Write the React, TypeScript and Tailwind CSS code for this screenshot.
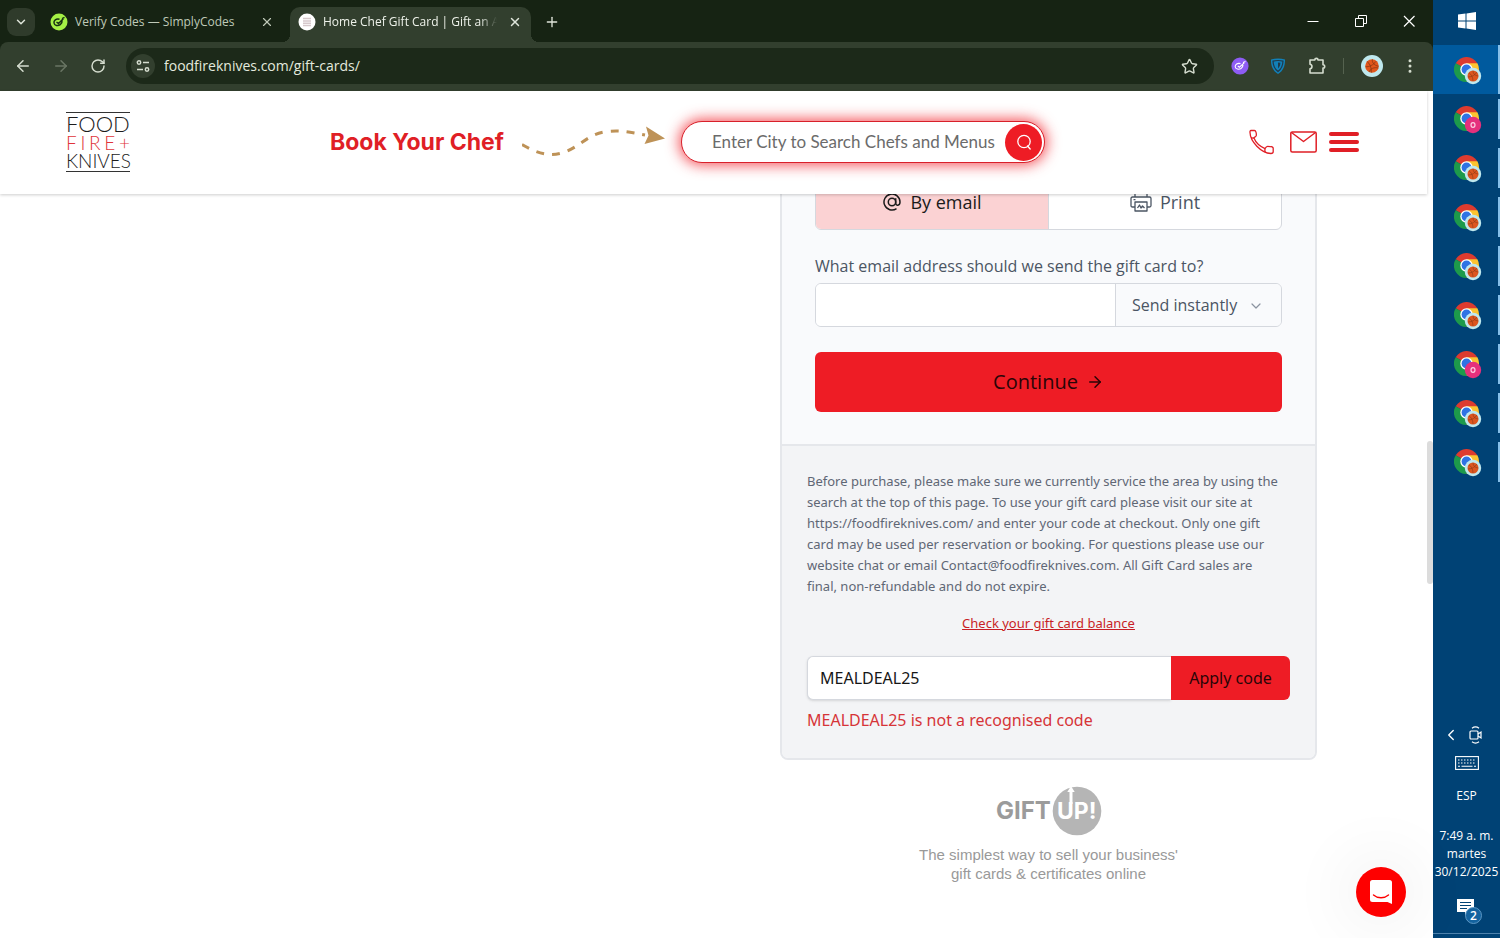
import { useState } from "react";
import {
  ArrowLeft,
  ArrowRight,
  ChevronDown,
  ChevronLeft,
  EllipsisVertical,
  Plus,
  RotateCw,
  Star,
  X,
} from "lucide-react";
import clsx from "clsx";

const windows = [
  { id: 1, profile: "ball", active: true },
  { id: 2, profile: "o" },
  { id: 3, profile: "ball" },
  { id: 4, profile: "ball" },
  { id: 5, profile: "ball" },
  { id: 6, profile: "ball" },
  { id: 7, profile: "o" },
  { id: 8, profile: "ball" },
  { id: 9, profile: "ball" },
];

const terms = [
  "Before purchase, please make sure we currently service the area by using the",
  "search at the top of this page. To use your gift card please visit our site at",
  "https://foodfireknives.com/ and enter your code at checkout. Only one gift",
  "card may be used per reservation or booking. For questions please use our",
  "website chat or email Contact@foodfireknives.com. All Gift Card sales are",
  "final, non-refundable and do not expire.",
];

function Basketball({ className }: { className?: string }) {
  return (
    <svg viewBox="0 0 22 22" className={className} aria-hidden>
      <circle cx="11" cy="11" r="11" fill="#bfe8ee" />
      <circle cx="11" cy="11" r="6.8" fill="#e2561b" />
      <path
        d="M6 6.500c3 2 4.500 5.500 4.300 11.200M11.500 4.300c-.8 3 1.500 6 6 7M4.400 11.800c4 .2 8-1.800 10.600-5.500M8 17c1.500-3.500 5-5 9.300-4"
        fill="none"
        stroke="#7d3212"
        strokeWidth=".7"
      />
    </svg>
  );
}

function ChromeIcon({ profile }: { profile: string }) {
  return (
    <svg viewBox="0 0 28 28" className="mt-0.5 size-7" aria-hidden>
      <path d="M12.500 12.500 1.700 6.200A12.500 12.500 0 0 1 23.300 6.200Z" fill="#dd3b2f" />
      <path d="M12.500 12.500 1.700 6.200A12.500 12.500 0 0 0 12.500 25L18 15Z" fill="#1d9a4b" />
      <path d="M12.500 6.300H23.400A12.500 12.500 0 0 1 12.500 25L18 15Z" fill="#fcc430" />
      <circle cx="12.500" cy="12.500" r="6.200" fill="#fff" />
      <circle cx="12.500" cy="12.500" r="4.900" fill="#2f73e4" />
      {profile === "ball" ? (
        <>
          <circle cx="19" cy="19" r="8.200" fill="#bfe8ee" />
          <circle cx="19" cy="19" r="5.500" fill="#dd561f" />
          <path
            d="M15 16c2 1 4 4 4 8M19 13.800c0 3 2 5 5.200 5.200M14 20c4 0 7-2 9-5"
            fill="none"
            stroke="#8a3a17"
            strokeWidth=".6"
          />
        </>
      ) : (
        <>
          <circle cx="19" cy="19" r="8.200" fill="#e5307c" />
          <ellipse cx="19" cy="19" rx="2" ry="2.400" fill="none" stroke="#fbd0e2" strokeWidth="1.200" />
        </>
      )}
    </svg>
  );
}

function TabStrip() {
  return (
    <div className="flex h-[42px] items-end bg-[#162313] pl-[7px] text-[#dfe5da]">
      <button type="button" aria-label="Search tabs" className="mb-[6px] flex size-7 items-center justify-center rounded-[9px] bg-[#2f3b2b]">
        <ChevronDown className="size-3.5" strokeWidth={2.5} />
      </button>
      <div className="flex h-[35px] w-[255px] items-center pb-[5px] pl-[15px] pr-4">
        <svg viewBox="0 0 18 18" className="mr-[7px] size-[18px]" aria-hidden>
          <circle cx="9" cy="9" r="8.500" fill="#a5f045" />
          <path d="M9.500 6.300C6 5.500 3.600 7.500 4 10c.4 2.700 4 3.300 6.200 1.700 1.600-1.200 2-3 1.800-4.200M6.500 9l2 1.500L13.500 5.500M12 5.600l2.500-1.200" fill="none" stroke="#173012" strokeWidth="1.500" />
        </svg>
        <span className="whitespace-nowrap text-xs text-[#bfc9b8]">Verify Codes — SimplyCodes</span>
        <button type="button" aria-label="Close tab" className="ml-auto text-[#bfc9b8]">
          <X className="size-3.5" />
        </button>
      </div>
      <div className="relative flex h-[35px] w-[241px] items-center rounded-t-[10px] bg-[#323f2e] pb-[5px] pl-2 pr-[9px]">
        <span className="absolute -left-2 bottom-0 size-2 bg-[radial-gradient(circle_at_top_left,#162313_8px,#323f2e_8px)]" />
        <span className="absolute -right-2 bottom-0 size-2 bg-[radial-gradient(circle_at_top_right,#162313_8px,#323f2e_8px)]" />
        <svg viewBox="0 0 18 18" className="mr-[7px] size-[18px] shrink-0" aria-hidden>
          <circle cx="9" cy="9" r="8.500" fill="#fff" />
          <path d="M5 5.500h8M5 8h8M5 10.300h8M5 12.500h8" stroke="#d6c8cb" strokeWidth="1.600" />
        </svg>
        <span className="w-[174px] overflow-hidden whitespace-nowrap text-xs text-[#eef2ea] [mask-image:linear-gradient(to_right,black_90%,transparent)]">
          Home Chef Gift Card | Gift an A
        </span>
        <button type="button" aria-label="Close tab" className="ml-auto">
          <X className="size-3.5" strokeWidth={2.5} />
        </button>
      </div>
      <button type="button" aria-label="New tab" className="mb-3 ml-[13px]">
        <Plus className="size-4" />
      </button>
      <div className="ml-auto flex h-full items-center gap-[34px] pr-[17px] text-white">
        <button type="button" aria-label="Minimize">
          <svg viewBox="0 0 14 14" className="size-3.5" aria-hidden>
            <path d="M1.500 7.500h11" stroke="currentColor" />
          </svg>
        </button>
        <button type="button" aria-label="Restore">
          <svg viewBox="0 0 14 14" className="size-3.5" fill="none" stroke="currentColor" aria-hidden>
            <path d="M1.500 4.500h8v8h-8zM4.500 4.500v-3h8v8h-3" />
          </svg>
        </button>
        <button type="button" aria-label="Close window">
          <svg viewBox="0 0 14 14" className="size-3.5" fill="none" stroke="currentColor" strokeWidth="1.200" aria-hidden>
            <path d="m2 2 10.500 10.500M12.500 2 2 12.500" />
          </svg>
        </button>
      </div>
    </div>
  );
}

function Toolbar() {
  return (
    <div className="bg-[#162313]">
      <div className="flex h-[49px] items-center rounded-t-lg bg-[#323f2e] px-3.5 pb-px text-[#d5ddcf]">
        <button type="button" aria-label="Back">
          <ArrowLeft className="size-[18px]" />
        </button>
        <button type="button" aria-label="Forward" className="ml-5 text-[#6a7664]">
          <ArrowRight className="size-[18px]" />
        </button>
        <button type="button" aria-label="Reload" className="ml-5">
          <RotateCw className="size-4" strokeWidth={2.2} />
        </button>
        <div className="ml-5 flex h-9 flex-1 items-center rounded-full bg-[#1c2919] pl-[5px] pr-4">
          <button type="button" aria-label="Site information" className="flex size-6 items-center justify-center rounded-full bg-[#323f2e]">
            <svg viewBox="0 0 16 16" className="size-4" fill="none" stroke="currentColor" strokeWidth="1.500" aria-hidden>
              <circle cx="4" cy="4.500" r="1.700" />
              <path d="M8 4.500h6M2 11.500h6" />
              <circle cx="12" cy="11.500" r="1.700" />
            </svg>
          </button>
          <input
            aria-label="Address"
            defaultValue="foodfireknives.com/gift-cards/"
            className="ml-[9px] min-w-0 flex-1 bg-transparent text-sm text-[#e3e9de] outline-none"
          />
          <button type="button" aria-label="Bookmark this page">
            <Star className="size-[17px]" />
          </button>
        </div>
        <button type="button" aria-label="SimplyCodes" className="ml-[17px]">
          <svg viewBox="0 0 18 18" className="size-[18px]" aria-hidden>
            <circle cx="9" cy="9" r="8.600" fill="#8e5cf5" />
            <path d="M9.500 6.600C6.500 5.800 4 7.500 4.200 9.800c.3 2.500 3.700 3 5.800 1.700 1.500-1 2-2.400 2-3.500M6.800 9l1.600 1.200 4.800-4.400M12 5.400l2.500-.8" fill="none" stroke="#fff" strokeWidth="1.100" />
          </svg>
        </button>
        <button type="button" aria-label="Shield" className="ml-5">
          <svg viewBox="0 0 18 18" className="size-[18px]" aria-hidden>
            <path d="M9 1.500c2.500 0 4.700.3 7 1 .3 6.500-2 11.500-7 14.500-5-3-7.300-8-7-14.500 2.300-.7 4.500-1 7-1Z" fill="#1280b8" />
            <path d="M9 3.500c2 0 3.400.2 5 .6-.1 4.500-1.600 8-5 10.500-3.400-2.500-4.900-6-5-10.500 1.600-.4 3-.6 5-.6Z" fill="none" stroke="#20394a" strokeWidth="1.200" />
            <path d="M9 5.500v6c1.500-1.500 2.300-3.500 2.400-5.800Z" fill="#20394a" />
          </svg>
        </button>
        <button type="button" aria-label="Extensions" className="ml-5">
          <svg viewBox="0 0 20 20" className="size-5" fill="none" stroke="currentColor" strokeWidth="1.600" strokeLinejoin="round" aria-hidden>
            <path d="M3 4h4.800a1.600 1.600 0 0 1 3.200 0H16v4.700a1.700 1.700 0 0 1 0 3.400V17H3v-4.200c2.600-.3 2.600-4.200 0-4.500Z" />
          </svg>
        </button>
        <span className="ml-4 h-4 w-px bg-[#55624f]" />
        <button type="button" aria-label="Profile" className="ml-[17px]">
          <Basketball className="size-[22px]" />
        </button>
        <button type="button" aria-label="Menu" className="ml-[18px]">
          <EllipsisVertical className="size-[18px]" />
        </button>
      </div>
    </div>
  );
}

function SiteHeader() {
  return (
    <header className="relative z-10 mr-[6px] flex h-[103px] items-center justify-between bg-white pb-px pl-[66px] pr-[68px] shadow-[0_1px_3px_rgba(0,0,0,0.2)]">
      <a
        href="#"
        aria-label="Food Fire + Knives"
        className="w-16 border-y border-[#333] py-px font-['Lato',sans-serif] font-light text-[#1c1c1c]"
      >
        <span className="block text-[22px] leading-[20px]">FOOD</span>
        <span className="flex justify-between text-[19px] leading-[18px] text-[#e0343a]">
          <span>F</span>
          <span>I</span>
          <span>R</span>
          <span>E</span>
          <span>+</span>
        </span>
        <span className="block text-[19px] leading-[18px]">KNIVES</span>
      </a>

      <div className="flex items-center pr-1">
        <span className="w-[177px] whitespace-nowrap font-['Inter',sans-serif] text-[23px] font-bold text-[#e01f26]">
          Book Your Chef
        </span>
        <svg viewBox="0 0 143 32" className="ml-[15px] h-8 w-[143px]" aria-hidden>
          <path
            d="M0 18.500C18 29 30 31 44 25.500 60 19 66 8 85 5.500c14-1.500 22 .5 38 3.500"
            fill="none"
            stroke="#be9257"
            strokeWidth="3"
            strokeDasharray="8 8"
          />
          <path d="m124 .5 19 12-20.500 5.500 4-8.500Z" fill="#be9257" />
        </svg>
        <form
          className="ml-4 flex h-[42px] w-[364px] items-center rounded-full border border-[#d8202a] bg-white pl-[30px] pr-[2px] shadow-[0_0_14px_2px_rgba(240,24,34,0.75)]"
          onSubmit={(e) => e.preventDefault()}
        >
          <input
            aria-label="Enter city"
            placeholder="Enter City to Search Chefs and Menus"
            className="min-w-0 flex-1 font-['Lato',sans-serif] text-[17px] text-[#444] outline-none placeholder:text-[#6b6b6b]"
          />
          <button type="submit" aria-label="Search" className="flex size-[37px] items-center justify-center rounded-full bg-[#ee1c25] text-white">
            <svg viewBox="0 0 18 18" className="size-[18px]" fill="none" stroke="currentColor" strokeWidth="1.300" aria-hidden>
              <circle cx="9" cy="8.500" r="6.200" />
              <path d="m12.500 13 2.700 3" strokeLinecap="round" />
            </svg>
          </button>
        </form>
      </div>

      <div className="flex items-center text-[#e01f26]">
        <a href="#" aria-label="Call us">
          <svg viewBox="0 0 26 26" className="size-[26px]" fill="none" stroke="currentColor" strokeWidth="1.300" strokeLinejoin="round" aria-hidden>
            <path d="M2 1.500h3.500c1.300 0 2 2.800 1.800 5-.1 1.200-1.600 1.500-2.500 2.300 1.800 4.400 6.200 8.700 11.200 10.800.6-1.100 1.200-2.300 2.500-2.300 2.500 0 5.700.6 5.700 2v3.400c0 1.200-1 1.800-2.300 1.800C12 24 1.300 12.500 1 3.500.9 2.300 1.200 1.500 2 1.500Z" />
            <path d="M2.200 8.300c1 .9 2 .8 2.600.5M16 19.600c-.2 1-.3 2.400.3 3.700" />
          </svg>
        </a>
        <a href="#" aria-label="Email us" className="ml-[15px]">
          <svg viewBox="0 0 27 22" className="h-[22px] w-[27px]" fill="none" stroke="currentColor" strokeWidth="1.500" strokeLinejoin="round" aria-hidden>
            <rect x=".8" y=".9" width="25.400" height="20.200" rx="1.500" />
            <path d="m1.500 1.500 12 9 12-9" />
          </svg>
        </a>
        <button type="button" aria-label="Open menu" className="ml-3 flex w-[30px] flex-col gap-1">
          <span className="h-1 rounded-full bg-[#e01f26]" />
          <span className="h-1 rounded-full bg-[#e01f26]" />
          <span className="h-1 rounded-full bg-[#e01f26]" />
        </button>
      </div>
    </header>
  );
}

function Checkout() {
  const [delivery, setDelivery] = useState("email");
  const [code, setCode] = useState("MEALDEAL25");

  return (
    <section className="-mt-14 w-[537px] rounded-lg border-2 border-[#e5e7eb] bg-[#f9fafc] font-['Noto_Sans',sans-serif] text-[#4b5563]">
      <div className="px-[33px] pb-8 pt-[34px] font-['Open_Sans',sans-serif]">
        <div className="flex h-[56px] overflow-hidden rounded-md border border-[#d5d8de] bg-white text-lg">
          <button
            type="button"
            onClick={() => setDelivery("email")}
            className={clsx("flex flex-1 items-center justify-center gap-2", delivery === "email" && "bg-[#fbd2d3] text-[#1a1a1a]")}
          >
            <svg viewBox="0 0 20 20" className="size-5" fill="none" stroke="currentColor" strokeWidth="1.500" aria-hidden>
              <circle cx="10" cy="10" r="3.700" />
              <path d="M13.700 6.300v4.700c0 3.200 4.300 3 4.300-1A8 8 0 1 0 14.500 16.600" />
            </svg>
            By email
          </button>
          <button
            type="button"
            onClick={() => setDelivery("print")}
            className={clsx("flex flex-1 items-center justify-center gap-2 border-l border-[#d5d8de]", delivery === "print" && "bg-[#fbd2d3] text-[#1a1a1a]")}
          >
            <svg viewBox="0 0 22 20" className="h-5 w-[22px]" fill="none" stroke="currentColor" strokeWidth="1.300" strokeLinejoin="round" aria-hidden>
              <path d="M5 5V1h12v4M5 15H2.500C1.500 15 1 14.500 1 13.500v-7C1 5.500 1.500 5 2.500 5h17c1 0 1.500.5 1.500 1.500v7c0 1-.5 1.500-1.500 1.500H17" />
              <path d="M5 10h12v9H5zM7.500 16l2-3 1.500 3 1.500-2 2 2M3.500 7.700h2" />
            </svg>
            Print
          </button>
        </div>

        <label htmlFor="recipient" className="mt-6 block text-base leading-6">
          What email address should we send the gift card to?
        </label>
        <div className="mt-[5px] flex h-11 overflow-hidden rounded-md border border-[#d5d8de]">
          <input id="recipient" type="email" className="min-w-0 flex-1 bg-white px-3 outline-none" />
          <div className="relative w-[166px] border-l border-[#d5d8de]">
            <select aria-label="When to send" className="h-full w-full appearance-none bg-[#f9fafc] pl-4 text-base outline-none">
              <option>Send instantly</option>
              <option>Send later</option>
            </select>
            <ChevronDown className="pointer-events-none absolute right-[17px] top-[14px] size-4 text-[#8b93a0]" strokeWidth={1.8} />
          </div>
        </div>

        <button type="button" className="mt-[25px] flex h-[60px] w-full items-center justify-center gap-2 rounded-md bg-[#ee1c25] text-xl text-[#2a0507]">
          Continue
          <ArrowRight className="size-[18px]" />
        </button>
      </div>

      <div className="rounded-b-md border-t-2 border-[#e5e7eb] bg-[#f3f4f6] px-[25px] pb-[26px] pt-[25px]">
        <p className="whitespace-nowrap text-[13px] leading-[21px] text-[#5f6775]">
          {terms.map((line) => (
            <span key={line} className="block">
              {line}
            </span>
          ))}
        </p>
        <p className="mt-4 text-center text-[13px] leading-[21px]">
          <a href="#" className="text-[#c81e26] underline">
            Check your gift card balance
          </a>
        </p>
        <form className="mt-[22px] flex h-11" onSubmit={(e) => e.preventDefault()}>
          <input
            aria-label="Promo code"
            value={code}
            onChange={(e) => setCode(e.target.value)}
            className="min-w-0 flex-1 rounded-l-md border border-r-0 border-[#d5d8de] bg-white px-3 text-base text-[#161616] shadow-sm outline-none"
          />
          <button type="submit" className="w-[119px] rounded-r-md bg-[#ee1c25] text-base text-[#2a0507]">
            Apply code
          </button>
        </form>
        <p className="mt-2 text-base leading-6 text-[#d63438]">MEALDEAL25 is not a recognised code</p>
      </div>
    </section>
  );
}

function GiftUp() {
  return (
    <a href="#" className="mt-[26px] block text-center font-['Liberation_Sans',sans-serif] text-[15px] leading-[19px] text-[#999]">
      <svg viewBox="0 0 106 50" className="mx-auto mb-[9px] h-[50px] w-[106px]" aria-label="Gift Up!">
        <circle cx="81" cy="25" r="24.300" fill="#b5b5b5" />
        <text x="0" y="33" fontFamily="Inter, sans-serif" fontWeight="700" fontSize="24" fill="#9b9b9b">
          GIFT
        </text>
        <text x="61" y="33" fontFamily="Inter, sans-serif" fontWeight="700" fontSize="23" fill="#fff">
          UP!
        </text>
        <path d="M73.500 18V6h-2.200l3.700-6 3.700 6h-2.200v12Z" fill="#fff" />
      </svg>
      The simplest way to sell your business'
      <br />
      gift cards &amp; certificates online
    </a>
  );
}

function Taskbar() {
  return (
    <aside className="flex w-[67px] shrink-0 flex-col items-center bg-[#004275] font-['Open_Sans',sans-serif] text-xs text-white">
      <button type="button" aria-label="Start" className="flex h-[45px] w-full items-center justify-center pb-[3px]">
        <svg viewBox="0 0 18 18" className="size-[18px]" fill="#fff" aria-hidden>
          <path d="M0 2.600 7.500 1.600v7H0ZM8.500 1.400 18 0v8.600H8.500ZM0 9.500h7.500v7L0 15.500ZM8.500 9.500H18V18l-9.500-1.400Z" />
        </svg>
      </button>
      {windows.map((w) => (
        <button
          key={w.id}
          type="button"
          aria-label={`Chrome window ${w.id}`}
          className={clsx("flex h-[49px] w-full items-center justify-end", w.active && "bg-[#005a9e]")}
        >
          <ChromeIcon profile={w.profile} />
          <span className={clsx("ml-4 w-[2px] bg-[#86bfe9]", w.active ? "h-full" : "h-10")} />
        </button>
      ))}
      <div className="mt-auto flex items-center gap-2 pr-2">
        <ChevronLeft className="size-[18px]" strokeWidth={1.8} />
        <svg viewBox="0 0 16 18" className="h-[18px] w-4" fill="none" stroke="currentColor" strokeWidth="1.200" aria-hidden>
          <rect x="2" y="5" width="8" height="8" rx="1" />
          <path d="m10 8 3-2v6l-3-2M4 2.200c2-1.500 5-1.500 7 0M4 15.800c2 1.500 5 1.500 7 0" />
        </svg>
      </div>
      <svg viewBox="0 0 24 14" className="mt-3 h-3.5 w-6" fill="none" stroke="currentColor" strokeWidth="1.100" aria-hidden>
        <rect x=".6" y=".6" width="22.800" height="12.800" />
        <path d="M3 4h18M3 7h18" strokeDasharray="1.500 1.500" />
        <path d="M3 10.200h2M6.500 10.200h11M19 10.200h2" />
      </svg>
      <span className="mt-[17px] leading-[18px]">ESP</span>
      <div className="mt-[22px] whitespace-nowrap text-center leading-[18px]">
        <div>7:49 a. m.</div>
        <div>martes</div>
        <div>30/12/2025</div>
      </div>
      <button type="button" aria-label="2 notifications" className="mb-2 mt-4">
        <svg viewBox="0 0 28 28" className="ml-1 size-7" aria-hidden>
          <path d="M2 2h17v13h-5l-4 4v-4H2Z" fill="#fff" />
          <path d="M5 5.500h11M5 8.500h11M5 11.500h7" stroke="#004275" strokeWidth="1.200" />
          <circle cx="18.500" cy="18.500" r="8" fill="#14639f" stroke="#5b96c4" />
          <text x="18.500" y="22.700" textAnchor="middle" fontSize="12" fill="#fff" fontWeight="600">
            2
          </text>
        </svg>
      </button>
      <span className="mb-1 h-px w-full bg-[#4d82ad]" />
    </aside>
  );
}

export default function App() {
  return (
    <div className="flex h-screen overflow-hidden bg-white">
      <div className="relative flex min-w-0 flex-1 flex-col font-['Open_Sans',sans-serif]">
        <TabStrip />
        <Toolbar />
        <SiteHeader />
        <main className="flex min-h-0 flex-1 justify-end overflow-hidden pr-[116px]">
          <div>
            <Checkout />
            <GiftUp />
          </div>
        </main>
        <span className="absolute right-0 top-[441px] h-[143px] w-[6px] rounded-full bg-[#dcdcdc]" />
        <button
          type="button"
          aria-label="Open chat"
          className="absolute bottom-[21px] right-[27px] flex size-[50px] items-center justify-center rounded-full bg-[#fe0000] shadow-[0_0_60px_20px_rgba(0,0,0,0.04)]"
        >
          <svg viewBox="0 0 24 26" className="h-[26px] w-6" aria-hidden>
            <path d="M3.500 1h17A2.500 2.500 0 0 1 23 3.500V25l-4.500-2h-15A2.500 2.500 0 0 1 1 20.500v-17A2.500 2.500 0 0 1 3.500 1Z" fill="#fff" />
            <path d="M4.500 16c4 3.600 11 3.600 15 0" fill="none" stroke="#fe0000" strokeWidth="1.400" strokeLinecap="round" />
          </svg>
        </button>
      </div>
      <Taskbar />
    </div>
  );
}
